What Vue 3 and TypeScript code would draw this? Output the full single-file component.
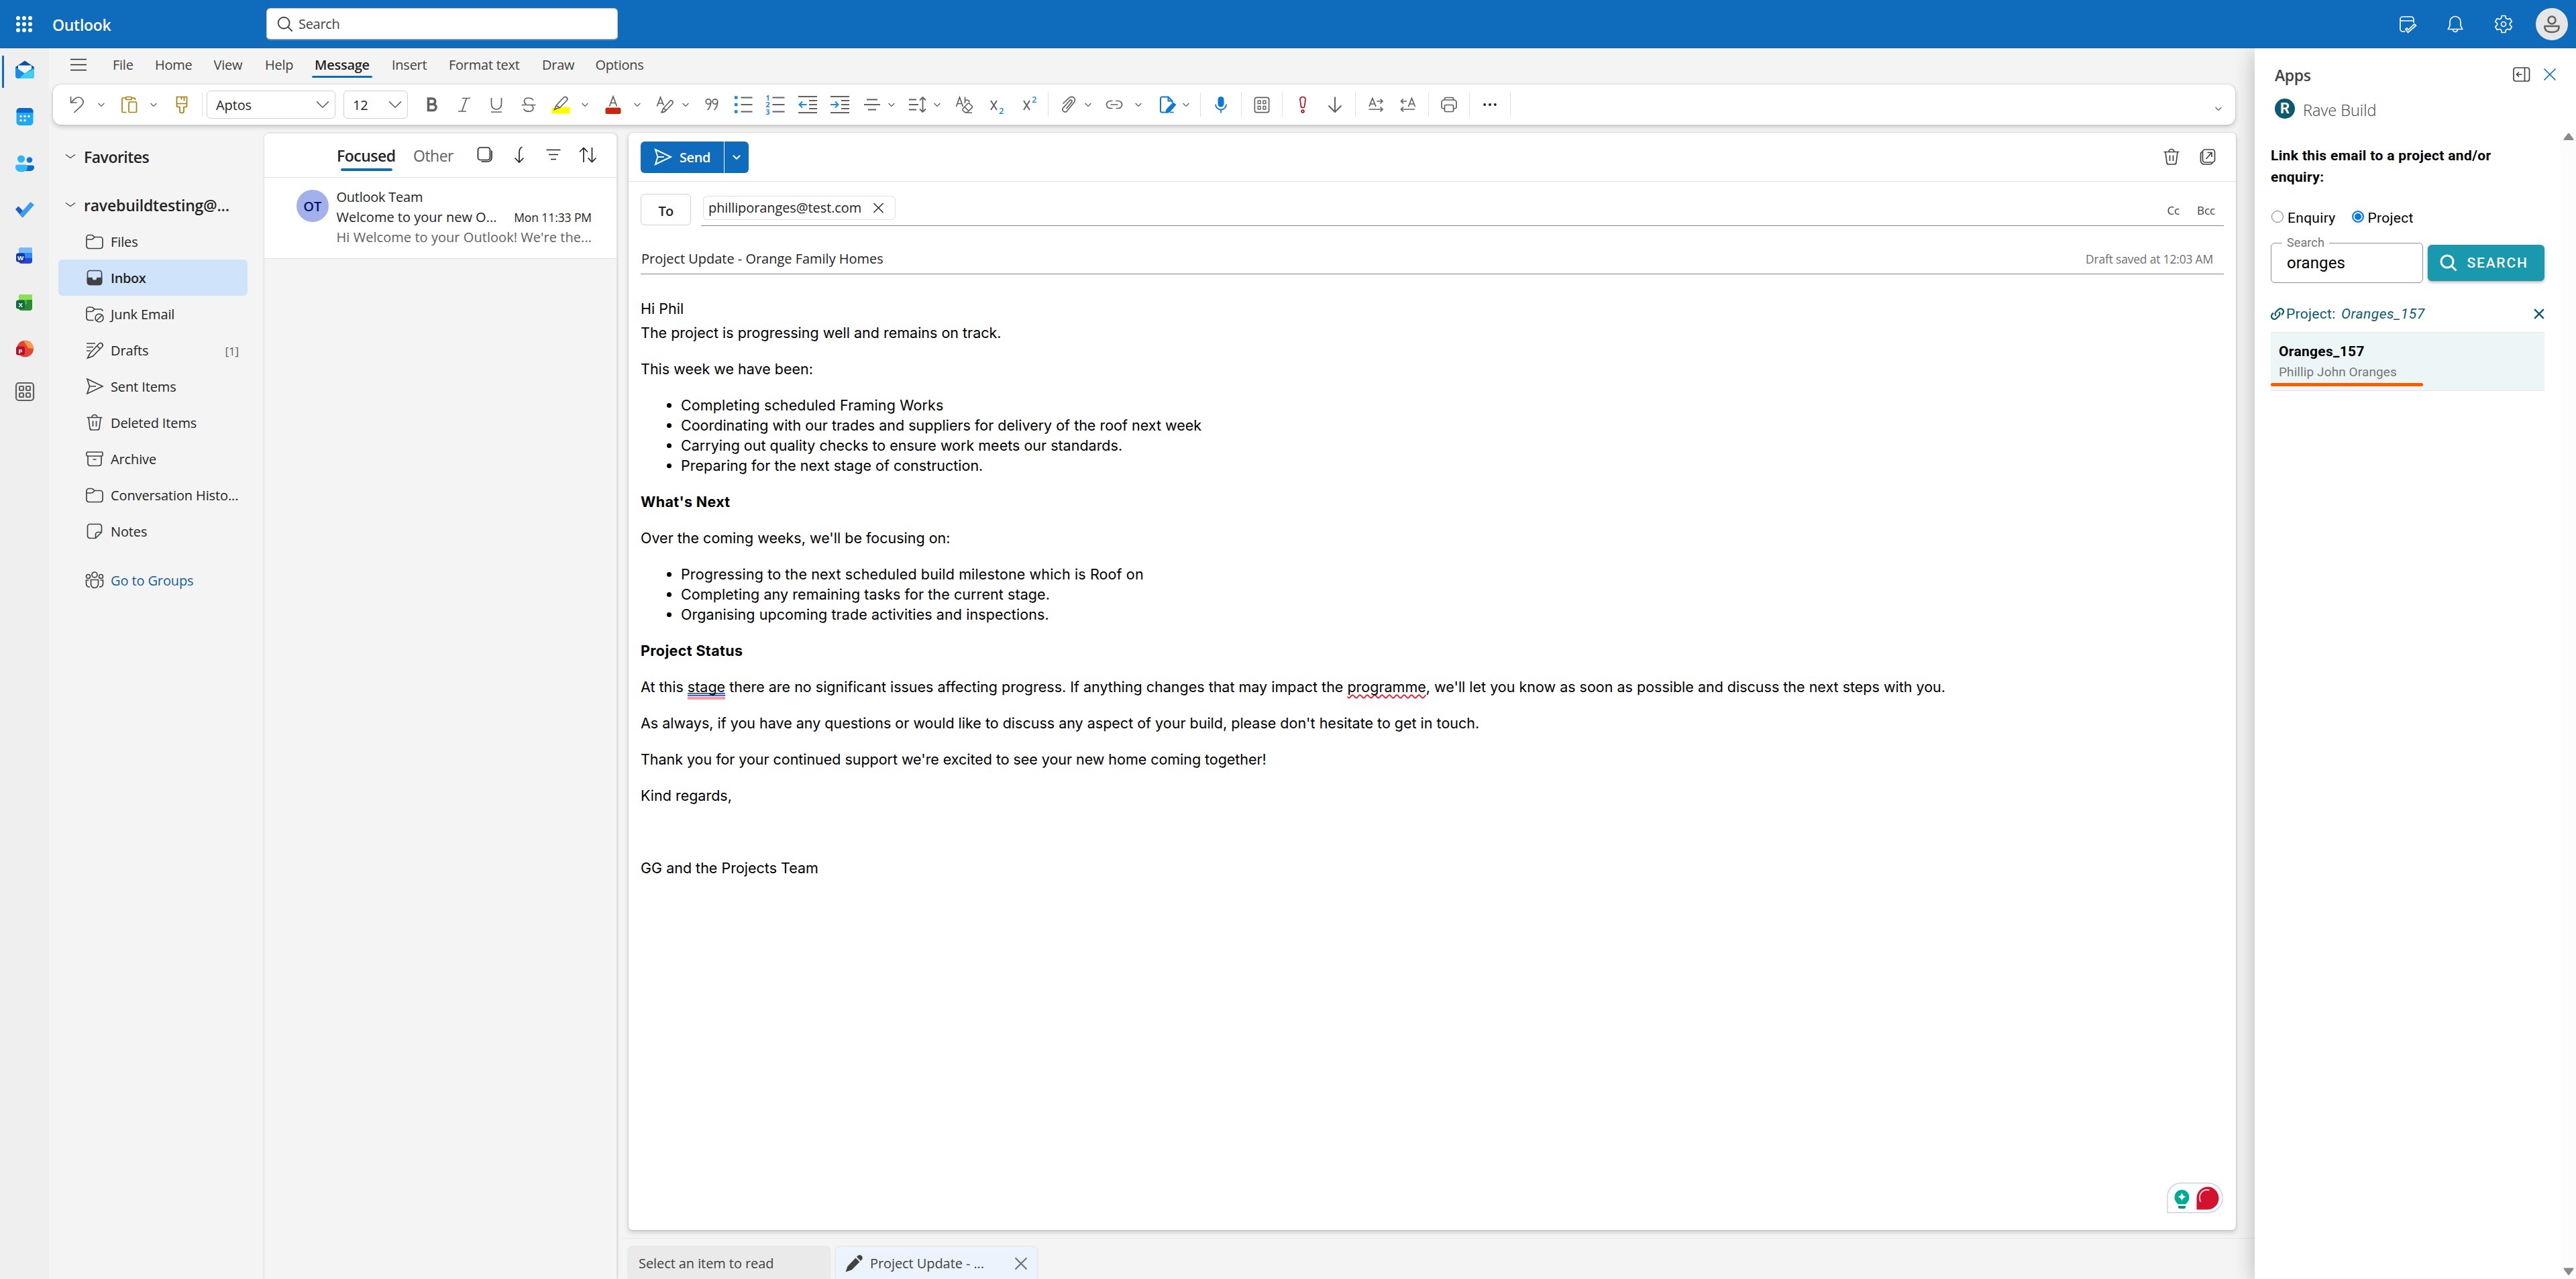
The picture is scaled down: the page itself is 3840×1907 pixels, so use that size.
<script setup lang="ts">
interface Tool { icon: string; gap: number; w: number }

const icons: Record<string, string> = {
  chev: '<path d="M9.5 12.5l5.500 5.500 5.500-5.500"/>',
  undo: '<path d="M5.500 3v9h9M6 12l5-5.200c3.600-3.700 8.400-3.600 11 -.6 2.700 3 2.600 7-.4 10.200L10.500 27"/>',
  paste: '<path d="M9.500 5H5.500a1.500 1.500 0 0 0-1.500 1.500v18.500a1.500 1.500 0 0 0 1.500 1.500h5M18 5h4a1.500 1.500 0 0 1 1.500 1.500V8"/><rect x="9.500" y="3.500" width="9" height="4" rx="2"/><rect x="14" y="11" width="11.500" height="15.500" rx="1.500"/>',
  brush: '<path d="M7.500 3.500h15v13a2 2 0 0 1-2 2h-2.500v6a3 3 0 0 1-6 0v-6H9.500a2 2 0 0 1-2-2zM7.500 13.500h15M14.500 4v3.500M18.500 4v5.500"/>',
  bold: '<path d="M9.500 6h6a4.200 4.200 0 0 1 0 8.500h-6zM9.500 14.500h7a4.500 4.500 0 0 1 0 9h-7z" stroke-width="3.600"/>',
  italic: '<path d="M12 5.500h12M6 25h12M18.500 5.500L11.500 25"/>',
  underline: '<path d="M7.500 5v9.500a7.500 7.500 0 0 0 15 0V5M7 26h16"/>',
  strike: '<path d="M22 8.500c-1.500-2.500-4-3.500-7-3.500-4 0-6.500 2-6.500 5 0 2 1 3.400 3 4.500M4.500 15.500h21M19.500 16c1.700 1.100 2.500 2.500 2.500 4.200 0 3-2.800 5-6.800 5-3.300 0-6.200-1.500-7.700-4"/>',
  highlight: '<path d="M1.500 19.500h7l5 1.500 3-2.500h10.500a2 2 0 0 1 2 2V26.500a2 2 0 0 1-2 2H1.500z" fill="#ff0" stroke="none"/><path d="M8 16.500L19 4.500a3.300 3.300 0 0 1 5 4.300L13.500 19.500l-5 1.500-3 1.500zM8 16.500l5.500 3"/>',
  fontcolor: '<rect x="3.500" y="19.500" width="23" height="9.500" rx="2.500" fill="#c9260f" stroke="none"/><path d="M9.500 17.500L15 3l5.500 14.500M11.500 12.500h7"/>',
  styles: '<path d="M3.500 17.500L8.500 4l4.800 12M5.200 13h6.500M13 20.500l9.500-10.500a2.600 2.600 0 0 1 4 3.500L17 23.500c-2 2-3 3.300-7.500 3.300 2.300-1.200 1.500-3.800 3.500-6.300zM13 20.500l4 3"/>',
  quote: '<circle cx="10" cy="10.500" r="3.700"/><path d="M13.700 10.500c0 5-1.500 9-5 12.500"/><circle cx="20" cy="10.500" r="3.700"/><path d="M23.700 10.500c0 5-1.500 9-5 12.500"/>',
  bullets: '<path d="M11.500 4.500h17M11.500 15h17M11.500 25.500h17" stroke-width="2"/><path d="M2 2.200h4.500v4.600H2zM2 12.700h4.500v4.600H2zM2 23.200h4.500v4.600H2z" fill="#1f8ad1" stroke="none"/>',
  numbers: '<path d="M10.500 4.500h18M10.500 15h18M10.500 25.500h18" stroke-width="2"/><g fill="#1f8ad1" stroke="none" font-family="Open Sans, sans-serif" font-size="10.500" font-weight="700"><text x="0.500" y="8.500">1</text><text x="0.500" y="19">2</text><text x="0.500" y="29.500">3</text></g>',
  outdent: '<path d="M1 3h28M17 9h12M17 15h12M17 21h12M1 27h28" stroke-width="2"/><path d="M13.500 15H2.500M7 10.500L2.500 15 7 19.500" stroke="#1f8ad1" stroke-width="2"/>',
  indent: '<path d="M1 3h28M17 9h12M17 15h12M17 21h12M1 27h28" stroke-width="2"/><path d="M1 15h11.500M8 10.500l4.500 4.500L8 19.500" stroke="#1f8ad1" stroke-width="2"/>',
  align: '<path d="M7 7.500h16M3 15h24M9 22.500h12" stroke-width="2"/>',
  spacing: '<path d="M2 7.500h11M2 15h14M2 22.500h11M22.500 4.500v21M18 8.500L22.500 4l4.500 4.500M18 21.500l4.500 4.500 4.500-4.500" stroke-width="1.800"/>',
  clear: '<path d="M2.500 18L7.500 4l5 14M4 13.500h7M15.500 3.500v9.500M15.500 9.500c1-2 6.500-2 6.500 2M12.500 21l7-7.500a2 2 0 0 1 2.800 0l3.500 3.500a2 2 0 0 1 0 2.800l-7 6.700h-3.500l-3-3a2 2 0 0 1 .2-2.500zM15 18.500l6 6M16 27h10"/>',
  sub: '<path d="M4 9l9 14M13 9L4 23" stroke-width="2"/><text x="16" y="29" fill="#1f8ad1" stroke="none" font-family="Open Sans, sans-serif" font-size="13" font-weight="600">2</text>',
  sup: '<path d="M5 9l9 14M14 9L5 23" stroke-width="2"/><text x="17" y="12" fill="#1f8ad1" stroke="none" font-family="Open Sans, sans-serif" font-size="13" font-weight="600">2</text>',
  clip: '<path d="M6.500 13.500L15.500 5.200a5 5 0 0 1 7.800 6.300L12.500 24.500a3.700 3.700 0 0 1-6-4.300L16.500 9a1.900 1.900 0 0 1 3 2.400L11.500 21"/>',
  link: '<path d="M12.500 9.500H9a5.500 5.500 0 0 0 0 11h3.500M17.500 9.500H21a5.500 5.500 0 0 1 0 11h-3.500M9.500 15h11"/>',
  sign: '<path d="M16.500 26.500H6a2 2 0 0 1-2-2v-19a2 2 0 0 1 2-2h9.500l6 6V12M15.500 3.500v6h6" stroke="#0f78d4" stroke-width="2"/><path d="M13 22l9.500-10 4.500 3-9 10.500-6 1.500z" fill="#0f78d4" stroke="#0f78d4" stroke-width="1"/><path d="M18 26.500h5.500" stroke="#0f78d4"/>',
  mic: '<rect x="10.500" y="3" width="9" height="15.500" rx="4.500" fill="#0f78d4" stroke="none"/><path d="M7 14.500a8 8 0 0 0 16 0M15 22.500v5" stroke="#0f78d4" stroke-width="1.800"/>',
  apps: '<rect x="4" y="3.500" width="22" height="23" rx="3"/><path d="M9 8.500h4v4.500H9zM17 8.500h4v4.500h-4zM9 17h4v4.500H9zM17 17h4v4.500h-4z" stroke-width="1.500"/>',
  high: '<path d="M15 3.500c2.500 0 4.300 1.600 4 4L17.500 18c-.3 2-4.700 2-5 0L11 7.500c-.3-2.400 1.500-4 4-4z" stroke="#b10e1c"/><circle cx="15" cy="25" r="1.900" stroke="#b10e1c"/>',
  low: '<path d="M15 3.500v22.500M5.500 16.500L15 26l9.500-9.500" stroke-width="2"/>',
  ltr: '<path d="M5 18L10 5.500 15 18M7 14h6M16.500 10h8.500M21.500 6.500L25 10l-3.500 3.500M4.500 22h20.500M21.500 18.500L25 22l-3.500 3.500"/>',
  rtl: '<path d="M15.500 18l5-12.500 5 12.500M17.500 14h6M13 10H4.500M8 6.500L4.500 10 8 13.500M25 22H4.500M8 18.500L4.500 22 8 25.500"/>',
  print: '<path d="M8.500 8V6a1.500 1.500 0 0 1 1.500-1.500h10A1.500 1.500 0 0 1 21.500 6v2M8.500 21H6.500a2.500 2.500 0 0 1-2.500-2.500V11.500A3.500 3.500 0 0 1 7.500 8h15a3.500 3.500 0 0 1 3.500 3.500v7a2.500 2.500 0 0 1-2.500 2.500h-2"/><rect x="8.500" y="15.500" width="13" height="10" rx="1.500"/>',
  dots: '<g fill="#242424" stroke="none"><circle cx="7.200" cy="15" r="2"/><circle cx="15" cy="15" r="2"/><circle cx="22.800" cy="15" r="2"/></g>',
  folder: '<path d="M3 9a3.500 3.500 0 0 1 3.500-3.500h4a3 3 0 0 1 2 .8L15 8.500h8.500a3.500 3.500 0 0 1 3.500 3.500V22a3.500 3.500 0 0 1-3.500 3.500h-17A3.500 3.500 0 0 1 3 22zM3 12h7.500a3 3 0 0 0 2-.8L15 8.500"/>',
  inbox: '<rect x="4.500" y="4.500" width="21" height="21" rx="3.500"/><path d="M4.500 15.500h6.500c0 5 8 5 8 0h6.500V22a3.500 3.500 0 0 1-3.500 3.500H8A3.500 3.500 0 0 1 4.500 22z" fill="currentColor"/>',
  junk: '<path d="M13.500 24.500H6.500A3.500 3.500 0 0 1 3 21V8.500A3.500 3.500 0 0 1 6.500 5h4a3 3 0 0 1 2 .8L15 8h8.500a3.500 3.500 0 0 1 3.500 3M3 11.500h7.500a3 3 0 0 0 2-.8L15 8"/><circle cx="22" cy="21" r="6"/><path d="M18 25l8-8"/>',
  drafts: '<path d="M3 5h13M3 10.500h10M3 16h6M8 20L21.500 5.500a3.200 3.200 0 0 1 4.700 4.500L12.500 24l-8 3zM18.500 8.500l4.500 4.500"/>',
  sent: '<path d="M4 4L27 15 4 26l3.500-11zM7.500 15h9.500"/>',
  trash: '<path d="M3.500 7.500h23M11 7.500a4 4 0 0 1 8 0M6 7.500l2 16a3 3 0 0 0 3 2.500h8a3 3 0 0 0 3-2.500l2-16M12.500 12.500v8.500M17.500 12.500v8.500"/>',
  archive: '<rect x="3" y="5" width="24" height="6" rx="1.500"/><path d="M5 11v11a3.500 3.500 0 0 0 3.500 3.500h13A3.500 3.500 0 0 0 25 22V11M12.500 16h5"/>',
  note: '<path d="M8 4.500h14A3.500 3.500 0 0 1 25.500 8v8.500l-9 9H8A3.500 3.500 0 0 1 4.500 22V8A3.500 3.500 0 0 1 8 4.500zM25.500 16.500H20a3.500 3.500 0 0 0-3.500 3.500v5.500"/>',
  groups: '<circle cx="15" cy="7" r="4"/><circle cx="5.500" cy="9.500" r="3"/><circle cx="24.500" cy="9.500" r="3"/><path d="M9.500 14.500h11v6.500a5.500 5.500 0 0 1-11 0zM6.500 15H2.500v5.500a4.500 4.500 0 0 0 5.500 4.500M23.500 15h4v5.500a4.500 4.500 0 0 1-5.500 4.500"/>',
  select: '<rect x="4.500" y="4" width="18" height="18.500" rx="3.500"/><path d="M25 8.500v10.500a6 6 0 0 1-6 6H9.500"/>',
  jump: '<path d="M19.500 3c-3.500 1.500-4.500 4.500-4.500 8.500V26M8.500 19.500L15 26l6.500-6.500"/>',
  filter: '<path d="M4.500 7.500h21M8 14.500h14M11 21.500h8"/>',
  sort: '<path d="M9 26V4.500M3 10.500L9 4.500l6 6M21.500 4v21.500M15.500 19.500l6 6 6-6"/>',
  popout: '<path d="M7.500 7A4 4 0 0 0 4.500 11v9.500a5.500 5.500 0 0 0 5.500 5.500h8.500a4 4 0 0 0 3.700-2.500"/><rect x="7.500" y="4" width="18" height="19" rx="3.500"/><path d="M12.500 18l8-9M14.500 8.500h6.500V15"/>',
  x: '<path d="M6.500 6.500l17 17M23.500 6.500l-17 17"/>',
  search: '<circle cx="13" cy="13" r="9"/><path d="M19.500 19.500l7 7"/>',
  calcheck: '<path d="M11.500 26H7.500a3.500 3.500 0 0 1-3.500-3.500V7.500A3.500 3.500 0 0 1 7.500 4h13A3.500 3.500 0 0 1 24 7.500V13M4 10h20M12 22.500l3.500 5L27.500 17l-2.500-2-9 8.500-2-2.500z"/>',
  bell: '<path d="M15 3.500a8 8 0 0 0-8 8V17l-2.500 5.500h21L23 17v-5.500a8 8 0 0 0-8-8zM11.500 23a3.500 3.500 0 0 0 7 0"/>',
  gear: '<path d="M12.300 2.500h5.400l.8 3.800 2.400 1.400 3.700-1.200 2.700 4.700-2.900 2.600v2.400l2.900 2.600-2.700 4.700-3.700-1.200-2.400 1.400-.8 3.800h-5.400l-.8-3.800-2.400-1.400-3.700 1.200-2.700-4.700 2.900-2.600v-2.400L2.700 11.200l2.700-4.700 3.700 1.200 2.400-1.400z" stroke-linejoin="round"/><circle cx="15" cy="15" r="3.500"/>',
  dock: '<rect x="3" y="5" width="23.500" height="20" rx="3"/><path d="M19.500 5v20M15.500 15H7.500M11 11.500L7.500 15l3.500 3.500"/>',
  menu: '<path d="M3 6.500h24M3 14.500h24M3 22.500h24"/>',
  pencil: '<path d="M5.500 19L17.500 6.500l6 6L11.500 24.500l-9 3zM19 5l1.500-1.500a4.200 4.200 0 0 1 6 6L25 11z" fill="currentColor" stroke="none"/>',
  chain: '<g stroke-width="2.700"><path d="M12.500 18.500a5 5 0 0 1 0-7l4-4a5 5 0 0 1 7.500 7l-2 2"/><path d="M17.500 11.500a5 5 0 0 1 0 7l-4 4a5 5 0 0 1-7.500-7l2-2"/></g>',
  mail: '<path d="M1 11L15 1.500 29 11v4H1z" fill="#0a4fa8" stroke="none"/><path d="M5 8.500h20V22H5z" fill="#f4f7ff" stroke="none"/><path d="M1 11l14 9.500L29 11v13a4 4 0 0 1-4 4H5a4 4 0 0 1-4-4z" fill="#1590e8" stroke="none"/><path d="M8 28c2-6 8-8 21-14v10a4 4 0 0 1-4 4z" fill="#41cdf8" stroke="none"/>',
  calendar: '<rect x="2.500" y="2" width="25" height="26" rx="5" fill="#1fa8f6" stroke="none"/><path d="M2.500 9V7a5 5 0 0 1 5-5h15a5 5 0 0 1 5 5v2z" fill="#0a68cf" stroke="none"/><g fill="#fff" stroke="none"><circle cx="9" cy="14.500" r="1.700"/><circle cx="15" cy="14.500" r="1.700"/><circle cx="21" cy="14.500" r="1.700"/><circle cx="9" cy="20.500" r="1.700"/><circle cx="15" cy="20.500" r="1.700"/></g>',
  people: '<g stroke="none"><circle cx="22" cy="9.500" r="4.300" fill="#0f78d4"/><path d="M14 17.500h12a3 3 0 0 1 3 3c0 4-3.500 5.500-7 5.500h-8z" fill="#0d6cc9"/><circle cx="9.500" cy="8" r="5.500" fill="#2fb4f8"/><path d="M4 16.500h12a3 3 0 0 1 3 3c0 5.500-4.500 8-9.300 8S1 25 1 19.500a3 3 0 0 1 3-3z" fill="#35b9fa"/></g>',
  todo: '<path d="M1 15l4.500-4.500 6.500 6.500-.5 10.500z" fill="#1b5dbe" stroke="none"/><path d="M7 22.500L23.500 4 29 8.500 12 27.500z" fill="#3b9cf0" stroke="none"/>',
  word: '<g stroke="none"><rect x="6" y="3" width="20" height="24" rx="4" fill="#2743d8"/><path d="M6 10h20v9H6z" fill="#2b8cf5"/><path d="M6 7a4 4 0 0 1 4-4h16v8H6z" fill="#7cb8fb"/><rect x="2" y="11.500" width="13" height="13" rx="3" fill="#123a9e"/></g><text x="8.500" y="21.500" text-anchor="middle" fill="#fff" stroke="none" font-family="Open Sans, sans-serif" font-size="9.500" font-weight="700">W</text>',
  excel: '<g stroke="none"><rect x="6" y="3" width="20" height="24" rx="4" fill="#2a8a35"/><path d="M6 7a4 4 0 0 1 4-4h16v8H6z" fill="#8be056"/><path d="M6 11h12v7H6z" fill="#45b546"/><rect x="2" y="11.500" width="13" height="13" rx="3" fill="#0f6b3d"/></g><text x="8.500" y="21.500" text-anchor="middle" fill="#fff" stroke="none" font-family="Open Sans, sans-serif" font-size="9.500" font-weight="700">X</text>',
  ppt: '<g stroke="none"><circle cx="15.500" cy="15" r="12.500" fill="#e2443a"/><path d="M13 2.700l7 11.300 8 1a12.500 12.500 0 0 0-12.500-12.500z" fill="#fa9a45"/><rect x="2" y="11.500" width="13" height="13" rx="3" fill="#b81028"/></g><text x="8.500" y="21.500" text-anchor="middle" fill="#fff" stroke="none" font-family="Open Sans, sans-serif" font-size="9.500" font-weight="700">P</text>',
  more: '<g stroke-width="2.200"><rect x="2" y="2" width="26" height="26" rx="4"/><rect x="7" y="7" width="6" height="6" rx="1.500"/><rect x="17" y="7" width="6" height="6" rx="1.500"/><rect x="7" y="17" width="6" height="6" rx="1.500"/><rect x="17" y="17" width="6" height="6" rx="1.500"/></g>',
}

const t = (icon: string, gap: number, w = 30): Tool => ({ icon, gap, w })
const c = (gap: number) => t('chev', gap, 12)
const d = (gap: number) => t('div', gap, 1)
const toolsA: Tool[] = [t('undo', 0), c(15), t('paste', 21), c(15), t('brush', 21), d(15)]
const toolsB: Tool[] = [
  t('bold', 21), t('italic', 18), t('underline', 18), t('strike', 18), t('highlight', 18), c(15), t('fontcolor', 21), c(15),
  t('styles', 20), c(10), t('quote', 18), t('bullets', 17), t('numbers', 18), t('outdent', 18), t('indent', 18), t('align', 18), c(8),
  t('spacing', 18), c(8), t('clear', 20), t('sub', 20), t('sup', 18), d(11), t('clip', 15), c(8), t('link', 18), c(15), t('sign', 23), c(6),
  d(15), t('mic', 15), d(15), t('apps', 15), d(15), t('high', 15), t('low', 18), d(15), t('ltr', 15), t('rtl', 18), d(15), t('print', 15),
  d(15), t('dots', 15), d(15),
]

const tabs = [
  { label: 'File', w: 63 }, { label: 'Home', w: 87.5 }, { label: 'View', w: 76.5 }, { label: 'Help', w: 74 }, { label: 'Message', w: 115 },
  { label: 'Insert', w: 85 }, { label: 'Format text', w: 139 }, { label: 'Draw', w: 79.5 }, { label: 'Options', w: 80 },
]
const rail = [
  { icon: 'mail', h: 48 }, { icon: 'calendar', h: 70 }, { icon: 'people', h: 69 }, { icon: 'todo', h: 68 }, { icon: 'word', h: 70 },
  { icon: 'excel', h: 69 }, { icon: 'ppt', h: 69 }, { icon: 'more', h: 60 },
]
const folders = [
  { icon: 'folder', name: 'Files' }, { icon: 'inbox', name: 'Inbox' }, { icon: 'junk', name: 'Junk Email' },
  { icon: 'drafts', name: 'Drafts', count: '[1]' }, { icon: 'sent', name: 'Sent Items' }, { icon: 'trash', name: 'Deleted Items' },
  { icon: 'archive', name: 'Archive' }, { icon: 'folder', name: 'Conversation Histo...' }, { icon: 'note', name: 'Notes' },
]
const done = [
  'Completing scheduled Framing Works',
  'Coordinating with our trades and suppliers for delivery of the roof next week',
  'Carrying out quality checks to ensure work meets our standards.',
  'Preparing for the next stage of construction.',
]
const next = [
  'Progressing to the next scheduled build milestone which is Roof on',
  'Completing any remaining tasks for the current stage.',
  'Organising upcoming trade activities and inspections.',
]
</script>

<template>
  <div class="page">
    <header class="top">
      <svg class="waffle" viewBox="0 0 26 26"><g v-for="r in 3" :key="r"><circle v-for="k in 3" :key="k" :cx="4 + (k - 1) * 9" :cy="4 + (r - 1) * 9" r="3" fill="#fff" /></g></svg>
      <span class="brand">Outlook</span>
      <div class="search"><svg class="ic" viewBox="0 0 30 30" v-html="icons.search" /><span>Search</span></div>
      <div class="grow" />
      <svg class="ic h1" viewBox="0 0 30 30" v-html="icons.calcheck" />
      <svg class="ic h2" viewBox="0 0 30 30" v-html="icons.bell" />
      <svg class="ic h3" viewBox="0 0 30 30" v-html="icons.gear" />
      <svg class="me" viewBox="0 0 48 48"><circle cx="24" cy="24" r="24" fill="#e6e6e6" /><g fill="none" stroke="#616161" stroke-width="2.600"><circle cx="24" cy="18" r="5.500" /><path d="M13.500 27h21v1.500c0 5-4.500 7.500-10.500 7.500s-10.500-2.500-10.500-7.500z" stroke-linejoin="round" /></g></svg>
    </header>

    <div class="under">
      <nav class="rail">
        <div v-for="(r, i) in rail" :key="i" class="ritem" :class="{ on: i === 0 }" :style="{ height: r.h + 'px' }">
          <svg class="ic" viewBox="0 0 30 30" v-html="icons[r.icon]" />
        </div>
      </nav>

      <div class="main">
        <div class="tabs">
          <svg class="ic ham" viewBox="0 0 30 30" v-html="icons.menu" />
          <div v-for="tab in tabs" :key="tab.label" class="tab" :class="{ on: tab.label === 'Message' }" :style="{ width: tab.w + 'px' }"><span>{{ tab.label }}</span></div>
        </div>

        <div class="ribbon">
          <template v-for="(o, i) in toolsA" :key="i">
            <i v-if="o.icon === 'div'" class="div" :style="{ marginLeft: o.gap + 'px' }" />
            <svg v-else class="ic" :class="o.icon" :viewBox="o.w === 12 ? '7.500 0 15 30' : '0 0 30 30'" :style="{ marginLeft: o.gap + 'px', width: o.w + 'px' }" v-html="icons[o.icon]" />
          </template>
          <div class="combo font"><span>Aptos</span><svg class="ic" viewBox="0 0 30 30"><path d="M5.500 10l9.500 9.500 9.500-9.500" /></svg></div>
          <div class="combo size"><span>12</span><svg class="ic" viewBox="0 0 30 30"><path d="M5.500 10l9.500 9.500 9.500-9.500" /></svg></div>
          <template v-for="(o, i) in toolsB" :key="i">
            <i v-if="o.icon === 'div'" class="div" :style="{ marginLeft: o.gap + 'px' }" />
            <svg v-else class="ic" :class="o.icon" :viewBox="o.w === 12 ? '7.500 0 15 30' : '0 0 30 30'" :style="{ marginLeft: o.gap + 'px', width: o.w + 'px' }" v-html="icons[o.icon]" />
          </template>
          <div class="grow" />
          <svg class="ic chev last" viewBox="7.500 0 15 30" v-html="icons.chev" />
        </div>

        <div class="cols">
          <aside class="folders">
            <div class="group fav"><svg class="ic" viewBox="0 0 30 30"><path d="M5.500 11.500l9.500 7 9.500-7" /></svg><span>Favorites</span></div>
            <div class="group acc"><svg class="ic" viewBox="0 0 30 30"><path d="M5.500 11.500l9.500 7 9.500-7" /></svg><span>ravebuildtesting@...</span></div>
            <div v-for="f in folders" :key="f.name" class="folder" :class="{ on: f.name === 'Inbox' }">
              <svg class="ic" viewBox="0 0 30 30" v-html="icons[f.icon]" /><span class="fname">{{ f.name }}</span><span v-if="f.count" class="count">{{ f.count }}</span>
            </div>
            <div class="folder link"><svg class="ic" viewBox="0 0 30 30" v-html="icons.groups" /><span class="fname">Go to Groups</span></div>
          </aside>

          <section class="list">
            <div class="lhead">
              <span class="focused">Focused</span><span class="other">Other</span>
              <svg class="ic l1" viewBox="0 0 30 30" v-html="icons.select" />
              <svg class="ic l2" viewBox="0 0 30 30" v-html="icons.jump" />
              <svg class="ic l3" viewBox="0 0 30 30" v-html="icons.filter" />
              <svg class="ic l4" viewBox="0 0 30 30" v-html="icons.sort" />
            </div>
            <div class="mail">
              <div class="avatar">OT</div>
              <div class="mtext">
                <div class="from">Outlook Team</div>
                <div class="subj"><span>Welcome to your new O...</span><time>Mon 11:33 PM</time></div>
                <div class="prev">Hi Welcome to your Outlook! We're the...</div>
              </div>
            </div>
          </section>

          <div class="right">
            <section class="compose">
              <div class="chead">
                <div class="send"><div class="sleft"><svg class="ic" viewBox="0 0 30 30" v-html="icons.sent" /><span>Send</span></div><div class="sright"><svg class="ic" viewBox="7.500 0 15 30" v-html="icons.chev" /></div></div>
                <div class="grow" />
                <svg class="ic" viewBox="0 0 30 30" v-html="icons.trash" />
                <svg class="ic pop" viewBox="0 0 30 30" v-html="icons.popout" />
              </div>
              <div class="to">
                <div class="tobtn">To</div>
                <div class="tofield">
                  <div class="chip"><span>philliporanges@test.com</span><svg class="ic" viewBox="0 0 30 30" v-html="icons.x" /></div>
                  <div class="grow" /><span class="cc">Cc</span><span class="bcc">Bcc</span>
                </div>
              </div>
              <div class="subject"><span class="st">Project Update - Orange Family Homes</span><div class="grow" /><span class="saved">Draft saved at 12:03 AM</span></div>
              <article class="body">
                <div class="hi">Hi Phil</div>
                <p class="first">The project is progressing well and remains on track.</p>
                <p>This week we have been:</p>
                <ul><li v-for="l in done" :key="l">{{ l }}</li></ul>
                <p><b>What's Next</b></p>
                <p>Over the coming weeks, we'll be focusing on:</p>
                <ul class="next"><li v-for="l in next" :key="l">{{ l }}</li></ul>
                <p><b>Project Status</b></p>
                <p>At this <span class="gram">stage</span> there are no significant issues affecting progress. If anything changes that may impact the <span class="spell">programme</span>, we'll let you know as soon as possible and discuss the next steps with you.</p>
                <p>As always, if you have any questions or would like to discuss any aspect of your build, please don't hesitate to get in touch.</p>
                <p class="thanks">Thank you for your continued support we're excited to see your new home coming together!</p>
                <p>Kind regards,</p>
                <p>&nbsp;</p>
                <p>GG and the Projects Team</p>
              </article>
              <svg class="helper" viewBox="0 0 84 46">
                <path d="M1 45V21A20 20 0 0 1 21 1h40a22 22 0 0 1 0 44z" fill="#fff" stroke="#cfd1e0" stroke-width="1.500" />
                <path d="M22.500 11a11 11 0 0 0-11 11c0 5 2.500 7 5 10.500h12c2.500-3.500 5-5.500 5-10.500a11 11 0 0 0-11-11z" fill="#00ab93" /><path d="M17 35h11v1.500a2.500 2.500 0 0 1-2.500 2.500h-6a2.500 2.500 0 0 1-2.500-2.500z" fill="#00917f" />
                <path d="M22.500 15q1 5.500 6.300 6.500-5.300 1-6.300 6.500-1-5.500-6.300-6.500 5.300-1 6.300-6.500z" fill="#fff" />
                <path d="M44.500 40.500V23A16.500 17 0 1 1 61 40.500z" fill="#d3122f" /><path d="M50.500 29c-5-11 3-20 13-17.500" fill="none" stroke="#f8cdd3" stroke-width="2" />
              </svg>
            </section>
            <footer class="dock">
              <div class="dtab">Select an item to read</div>
              <div class="dtab on"><svg class="ic" viewBox="0 0 30 30" v-html="icons.pencil" /><span>Project Update - ...</span><div class="grow" /><svg class="ic dx" viewBox="0 0 30 30" v-html="icons.x" /></div>
            </footer>
          </div>
        </div>
      </div>

      <aside class="panel">
        <div class="phead"><span class="apps">Apps</span><div class="grow" /><svg class="ic" viewBox="0 0 30 30" v-html="icons.dock" /><svg class="ic px" viewBox="0 0 30 30" v-html="icons.x" /></div>
        <div class="prave"><div class="logo">R</div><span>Rave Build</span></div>
        <div class="pscroll">
          <div class="pbody">
            <div class="ptitle">Link this email to a project and/or<br>enquiry:</div>
            <div class="radios"><i class="radio" /><span class="enq">Enquiry</span><i class="radio on" /><span>Project</span></div>
            <div class="srow">
              <fieldset><legend>Search</legend><span>oranges</span></fieldset>
              <div class="sbtn"><svg class="ic" viewBox="0 0 30 30" v-html="icons.search" /><span>SEARCH</span></div>
            </div>
            <div class="linked"><svg class="ic" viewBox="0 0 30 30" v-html="icons.chain" /><span class="lp">Project:</span><em>Oranges_157</em><div class="grow" /><svg class="ic lx" viewBox="0 0 30 30" v-html="icons.x" /></div>
            <div class="card"><div class="ct">Oranges_157</div><div class="cs">Phillip John Oranges</div><div class="bar" /></div>
          </div>
          <div class="sbar"><svg viewBox="0 0 16 12"><path d="M7 .8L.6 9.500Q0 11 1.500 11h13Q16 11 15.400 9.500L9 .8Q8 0 7 .8z" /></svg><svg viewBox="0 0 16 12"><path d="M7 10.800L.6 2Q0 .5 1.500.5h13Q16 .5 15.400 2L9 10.800Q8 11.800 7 10.800z" /></svg></div>
        </div>
      </aside>
    </div>
  </div>
</template>

<style>
body { background: #f4f4f4; }
</style>

<style scoped>
* { box-sizing: border-box; }
.page { width: 3840px; height: 1907px; display: flex; flex-direction: column; overflow: hidden; background: #f4f4f4; font: 20px/30px 'Open Sans', 'Noto Sans', sans-serif; letter-spacing: -0.12px; color: #242424; white-space: nowrap; }
.ic { width: 30px; height: 30px; flex: none; fill: none; stroke: currentColor; stroke-width: 1.7; overflow: visible; }
.grow { flex: 1; }
.top { height: 72px; flex: none; background: #0f6cbd; color: #fff; display: flex; align-items: center; }
.waffle { width: 26px; height: 26px; margin-left: 23px; }
.brand { font-size: 23px; font-weight: 600; letter-spacing: -0.3px; margin-left: 29px; padding-top: 2px; width: 319px; }
.search { width: 524px; height: 48px; background: #fff; border-radius: 6px; border: 1px solid #c7c7c7; border-bottom: 2px solid #8f8f8f; color: #424242; display: flex; align-items: center; padding: 1px 0 0 12px; letter-spacing: -0.3px; }
.search .ic { margin-right: 5px; stroke-width: 2; padding: 1px; }
.h1 { margin-right: 41px; }
.h2 { margin-right: 42px; }
.h3 { margin-right: 33px; }
.me { width: 48px; height: 48px; margin-right: 12px; }
.under { flex: 1; display: flex; min-height: 0; }
.rail { width: 73px; flex: none; background: #efefef; color: #616161; display: flex; flex-direction: column; padding-top: 11px; }
.ritem { display: flex; align-items: center; justify-content: center; flex: none; }
.ritem.on { border-left: 3px solid #0f6cbd; margin: 0 0 8px 3px; padding: 0 6px 6px 0; }
.main { width: 3288px; flex: none; display: flex; flex-direction: column; min-height: 0; }
.tabs { height: 49px; margin-bottom: 5px; padding-left: 29px; display: flex; align-items: center; color: #424242; letter-spacing: -0.25px; flex: none; }
.ham { margin-right: 36px; color: #242424; }
.tab span { display: inline-block; line-height: 49px; position: relative; }
.tab.on { color: #242424; font-weight: 600; }
.tab.on span::after { content: ''; position: absolute; left: -4px; right: -4px; bottom: 5px; height: 3px; border-radius: 2px; background: #0f6cbd; }
.ribbon { height: 60px; flex: none; margin: 0 29px 12px 6px; padding: 0 19px 0 21px; background: #fff; border-radius: 12px; box-shadow: 0 0 2px rgba(0, 0, 0, 0.18), 0 3px 7px rgba(0, 0, 0, 0.2); display: flex; align-items: center; color: #616161; }
.ribbon .paste, .ribbon .brush { color: #a97e0b; }
.ribbon .chev { width: 12px; height: 24px; }
.ribbon .last { margin-top: 12px; }
.div { width: 1px; height: 36px; background: #e0e0e0; flex: none; }
.combo { height: 42px; border: 1px solid #d1d1d1; border-radius: 6px; display: flex; align-items: center; justify-content: space-between; color: #242424; padding: 2px 4px 0 13px; margin-left: 12px; }
.combo.font { width: 192px; margin-left: 6px; }
.combo.size { width: 96px; }
.combo .ic { color: #616161; margin-top: -2px; width: 28px; }
.cols { flex: 1; display: flex; min-height: 0; }
.folders { width: 320px; padding: 8px 24px 0 14px; flex: none; }
.group { display: flex; align-items: center; font-size: 23px; font-weight: 600; letter-spacing: -0.2px; padding-left: 3px; height: 55px; }
.group.fav { margin-bottom: 17px; letter-spacing: -0.5px; }
.group .ic { width: 22px; margin: -2px 9px 0 4px; color: #424242; }
.folder { height: 54px; border-radius: 6px; display: flex; align-items: center; padding-left: 39px; color: #242424; }
.folder .ic { margin-right: 9px; color: #424242; }
.folder .fname { padding-top: 2px; }
.folder .count { margin-left: auto; margin-right: 13px; font-size: 17px; color: #616161; padding-top: 3px; }
.folder.on { background: #cfe4fa; font-weight: 600; letter-spacing: -0.4px; }
.folder.link { margin-top: 19px; }
.folder.link .fname { color: #115ea3; }
.list { width: 527px; flex: none; border: 1px solid #e0e0e0; border-bottom: 0; border-radius: 8px 8px 0 0; box-shadow: 1px 0 3px rgba(0, 0, 0, 0.12); overflow: hidden; }
.lhead { height: 66px; background: #fff; border-bottom: 1px solid #e0e0e0; display: flex; align-items: center; padding-left: 108px; font-size: 23px; }
.focused { font-weight: 600; width: 114px; letter-spacing: -0.5px; position: relative; }
.focused::after { content: ''; position: absolute; left: 6px; width: 77px; top: 34px; height: 4px; border-radius: 2px; background: #0f6cbd; }
.other { width: 92px; color: #616161; letter-spacing: -0.5px; }
.lhead .ic { margin-top: -1px; }
.l2, .l3, .l4 { margin-left: 21px; }
.mail { height: 121px; background: #fff; border-bottom: 1px solid #e0e0e0; display: flex; padding: 14px 37px 0 48px; }
.avatar { width: 48px; height: 48px; border-radius: 50%; background: #a3b1ea; color: #00126b; font-weight: 600; line-height: 50px; text-align: center; margin: 4px 12px 0 0; }
.mtext { flex: 1; }
.subj { display: flex; justify-content: space-between; letter-spacing: 0; }
.subj time { font-size: 17.5px; letter-spacing: -0.1px; }
.from { letter-spacing: -0.25px; }
.prev { color: #616161; letter-spacing: 0.05px; }
.right { flex: 1; display: flex; flex-direction: column; min-width: 0; }
.compose { height: 1636px; flex: none; margin: 0 28px 12px 17px; background: #fff; border-radius: 6px; box-shadow: 0 0 2px rgba(0, 0, 0, 0.2), 0 3px 7px rgba(0, 0, 0, 0.2); position: relative; color: #242424; }
.chead { height: 73px; border-bottom: 1px solid #e0e0e0; display: flex; align-items: center; padding: 0 27px 0 18px; color: #424242; }
.send { width: 161px; height: 47px; border-radius: 6px; background: #0f6cbd; color: #fff; display: flex; font-weight: 600; letter-spacing: -0.4px; }
.sleft { width: 125px; display: flex; align-items: center; padding-left: 18px; border-right: 1px solid #fff; }
.sleft .ic { margin-right: 10px; stroke-width: 2; }
.sleft span { padding-top: 1px; }
.sright { flex: 1; display: flex; align-items: center; justify-content: center; }
.sright .ic { width: 14px; height: 28px; stroke-width: 2.2; }
.pop { margin-left: 24px; }
.to { display: flex; padding: 18px 18px 0; height: 66px; }
.tobtn { width: 75px; height: 47px; border: 1px solid #d1d1d1; border-radius: 6px; font-weight: 600; line-height: 50px; text-align: center; margin-right: 15px; letter-spacing: -0.8px; }
.tofield { flex: 1; height: 48px; border-bottom: 1px solid #858585; display: flex; padding: 3px 13px 0 3px; }
.chip { width: 287px; height: 36px; border: 1px solid #e0e0e0; border-radius: 6px; display: flex; align-items: center; padding-left: 7px; letter-spacing: -0.1px; }
.chip .ic { width: 25px; margin-left: 13px; }
.cc, .bcc { font-size: 17px; color: #424242; padding-top: 7px; }
.bcc { margin-left: 26px; }
.subject { margin: 0 18px; height: 72px; border-bottom: 1px solid #858585; display: flex; padding-top: 34px; }
.st { padding-left: 1px; letter-spacing: -0.02px; }
.saved { font-size: 17.5px; color: #707070; padding-right: 16px; letter-spacing: -0.2px; }
.body { padding: 36px 18px 0; font: 21.5px/30px Inter, 'Open Sans', sans-serif; letter-spacing: 0; color: #000; position: relative; z-index: 0; }
.body p { margin: 0 0 24px; }
.body b { letter-spacing: 0.35px; }
.hi { margin-bottom: 6px; }
.body ul { margin: 0 0 24px; padding-left: 60px; }
.body li:first-child { letter-spacing: 0.13px; }
.next li { letter-spacing: 0.08px; }
.thanks { letter-spacing: -0.04px; }
.gram { position: relative; }
.gram::after { content: ''; position: absolute; z-index: -1; left: 0; right: 0; top: 22px; height: 10px; background: linear-gradient(#3b5bf5 0 2px, #fff 2px 3px, #3b5bf5 3px 5px, #fff 5px 6px, #ff94a6 6px 10px); }
.spell { text-decoration: underline wavy #e0202c 2px; text-underline-offset: 3px; text-decoration-skip-ink: none; }
.helper { position: absolute; right: 19px; bottom: 25px; width: 84px; height: 46px; }
.dock { flex: 1; margin-left: 6px; border-top: 1px solid #e6e6e6; display: flex; gap: 9px; padding: 12px 0 0 11px; color: #424242; }
.dtab { width: 300px; background: #eaeaea; border-radius: 6px 6px 0 0; box-shadow: 0 0 3px rgba(0, 0, 0, 0.15); padding: 0 15px; line-height: 49px; letter-spacing: -0.08px; }
.dtab.on { background: #ebf3fc; display: flex; align-items: center; padding: 0 9px 0 12px; }
.dtab.on .ic:first-child { margin-right: 9px; }
.dx { color: #707070; stroke-width: 2; }
.panel { width: 479px; flex: none; background: #fff; box-shadow: 0 6px 30px rgba(0, 0, 0, 0.25); display: flex; flex-direction: column; position: relative; clip-path: inset(0 0 0 -60px); }
.phead { height: 75px; flex: none; display: flex; align-items: center; padding: 3px 24px 0 30px; color: #424242; }
.apps { font-size: 23px; font-weight: 600; letter-spacing: -0.4px; padding-top: 1px; }
.px { color: #0f6cbd; margin-left: 12px; }
.prave { height: 46px; flex: none; display: flex; padding-left: 30px; font-size: 23.500px; font-weight: 300; color: #424242; letter-spacing: 0; }
.prave span { padding-top: 2px; }
.logo { width: 30px; height: 30px; border-radius: 50%; background: #0c5a6e; color: #fff; font: 700 22px/30px Roboto, sans-serif; text-align: center; margin-right: 12px; }
.pscroll { flex: 1; display: flex; min-height: 0; }
.pbody { width: 456px; padding: 24px 24px 0; font: 21px/32px Roboto, sans-serif; letter-spacing: 0.3px; color: #000; }
.ptitle { font-weight: 700; line-height: 31.500px; letter-spacing: 0.35px; }
.radios { display: flex; align-items: center; height: 32px; margin-top: 29px; }
.radio { width: 18px; height: 18px; border: 1.500px solid #767676; border-radius: 50%; margin: -4px 6px 0 1px; }
.radio.on { border: 2px solid #0075ff; background: #0075ff; box-shadow: inset 0 0 0 2px #fff; }
.enq { margin-right: 23px; }
.srow { display: flex; margin-top: 10px; height: 71px; }
fieldset { width: 228px; height: 71px; margin: 0 7px 0 0; border: 1px solid #8f8f8f; border-radius: 6px; padding: 0 23px; font-size: 24px; letter-spacing: 0.1px; }
fieldset span { display: block; padding-top: 3px; }
legend { font-size: 18px; line-height: 22px; color: #757575; padding: 0 7px; margin-left: -7px; height: 22px; }
.sbtn { width: 174px; height: 54px; margin-top: 14px; border-radius: 6px; background: #1a98ad; color: #fff; display: flex; align-items: center; padding-left: 16px; font-weight: 500; letter-spacing: 1.8px; box-shadow: 0 2px 4px rgba(0, 0, 0, 0.3); }
.sbtn .ic { margin-right: 12px; stroke-width: 3; }
.linked { display: flex; align-items: center; height: 32px; margin-top: 30px; color: #0c5a6e; }
.linked .ic { width: 26px; height: 26px; margin-left: -3px; }
.lp { width: 82px; }
.linked em { letter-spacing: 0.5px; }
.linked .lx { width: 24px; margin-right: -4px; stroke-width: 3; }
.card { height: 88px; margin-top: 11px; background: #edf6f7; border-top: 1px solid #e2ecee; border-bottom: 1px solid #e2ecee; padding: 12px 0 0 12px; }
.ct { font-weight: 700; }
.cs { font-size: 19px; line-height: 30px; color: #757575; letter-spacing: 0.1px; }
.bar { width: 227px; height: 5px; border-radius: 3px; background: #ff5c00; margin: 1px 0 0 -12px; }
.sbar { width: 23px; background: #fcfcfc; display: flex; flex-direction: column; justify-content: space-between; align-items: center; padding: 5px 0; }
.sbar svg { width: 16px; height: 12px; fill: #8a8a8a; }
</style>
